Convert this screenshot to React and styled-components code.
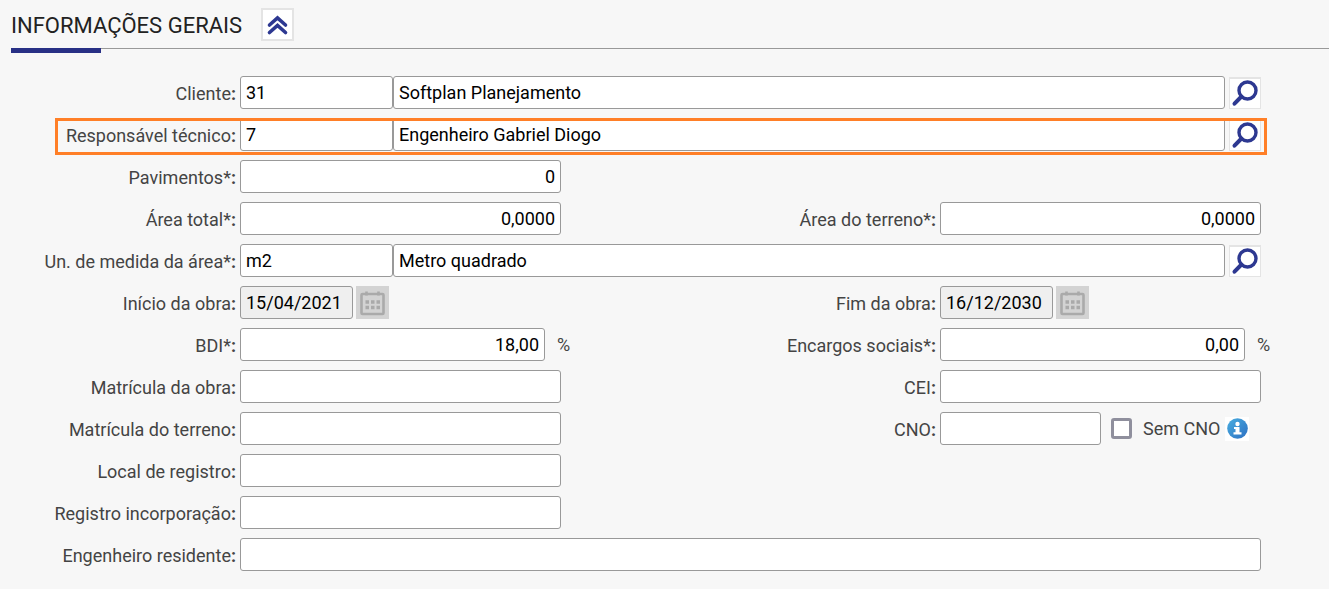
import { useId, useState } from 'react'
import styled, { createGlobalStyle, css } from 'styled-components'

const GlobalStyle = createGlobalStyle`
  *, *:before, *:after {
    box-sizing: border-box;
  }

  body {
    margin: 0;
    background: #f7f7f7;
    color: #444;
    font-family: Roboto, "Liberation Sans", sans-serif;
    font-size: 18px;
    line-height: 21px;
  }
`

const Page = styled.main`
  padding: 8px 0 16px 11px;
`

const Header = styled.header`
  position: relative;
  display: flex;
  align-items: center;
  gap: 19px;
  padding-bottom: 7px;
  border-bottom: 1px solid #999;

  &:after {
    content: '';
    position: absolute;
    left: 0;
    top: 100%;
    width: 90px;
    height: 5px;
    background: #283085;
  }
`

const Title = styled.h1`
  margin: 0;
  padding-top: 2px;
  color: #222;
  font-size: 22px;
  font-weight: 400;
  line-height: 31px;
`

const IconButton = styled.button`
  display: flex;
  align-items: center;
  justify-content: center;
  flex: none;
  width: 33px;
  height: 33px;
  padding: 0;
  border: 2px solid #e4e4e4;
  background: #fff;
  color: #2d3891;
  cursor: pointer;

  &:disabled {
    border-color: #d3d3d3;
    background: #d3d3d3;
    color: #aaa;
    cursor: default;
  }
`

const SearchButton = styled(IconButton)`
  width: 32px;
  height: 32px;
  margin-left: 4px;
  border-width: 2px 1px 1px;
`

const CalendarButton = styled(IconButton)`
  margin-left: 3px;
`

const Form = styled.form`
  display: flex;
  flex-direction: column;
  gap: 9px;
  padding: 27px 68px 0 0;
`

const Row = styled.div`
  position: relative;
  display: grid;
  grid-template-columns: 225px minmax(0, 1fr) 371px minmax(0, 1fr);
  column-gap: 4px;
  align-items: center;

  ${({ $highlight }) => $highlight && css`
    &:after {
      content: '';
      position: absolute;
      top: 0;
      right: -6px;
      bottom: -4px;
      left: 44px;
      border: 3px solid #ff7f27;
      pointer-events: none;
    }
  `}
`

const Label = styled.label`
  padding-top: 1px;
  text-align: right;
  white-space: nowrap;

  &:after {
    content: ':';
    font-weight: 700;
  }
`

const Cell = styled.div`
  display: flex;
  align-items: center;
  min-width: 0;
  grid-column: ${({ $full }) => ($full ? '2 / -1' : 'auto')};
`

const Input = styled.input`
  flex: ${({ $width }) => ($width ? 'none' : '1')};
  width: ${({ $width }) => $width || '100%'};
  min-width: 0;
  height: 33px;
  padding: 0 5px;
  border: 1px solid #999;
  border-radius: 3px;
  background: #fff;
  color: #000;
  font: inherit;
  text-align: ${({ $numeric }) => ($numeric ? 'right' : 'left')};

  &:disabled {
    background: #efefef;
  }
`

const Unit = styled.span`
  margin-left: 12px;
`

const Checkbox = styled.input`
  appearance: none;
  flex: none;
  width: 21px;
  height: 21px;
  margin: 0 11px 0 10px;
  border: 3px solid #8f8f9d;
  border-radius: 3px;
  background: #fff;

  &:checked {
    background: #2d3891;
  }
`

const CheckLabel = styled.label`
  white-space: nowrap;
`

const Info = styled.span`
  display: flex;
  flex: none;
  margin-left: 5px;
  background: #fff;
`

const CollapseIcon = () => (
  <svg width="29" height="29" viewBox="0 0 29 29" fill="none" stroke="currentColor" strokeWidth="3.6" strokeLinecap="round">
    <path d="M6.500 15 14.500 8l8 7M6.500 22.500l8-7 8 7" />
  </svg>
)

const SearchIcon = () => (
  <svg width="30" height="29" viewBox="0 0 30 29" fill="none" stroke="currentColor">
    <circle cx="17.500" cy="11.500" r="8.500" strokeWidth="3.400" />
    <path d="m11.500 17.500-7 7.200" strokeWidth="4" strokeLinecap="round" />
  </svg>
)

const CalendarIcon = () => (
  <svg width="29" height="29" viewBox="0 0 29 29" fill="none" stroke="currentColor">
    <rect x="3.500" y="6" width="22" height="20" rx="1" strokeWidth="2.600" />
    <path d="M8.500 3.500v4M20.500 3.500v4" strokeWidth="2.600" />
    <path d="M7.500 14h3.500m2 0h3.500m2 0H22M7.500 19.500h3.500m2 0h3.500m2 0H22" strokeWidth="3.500" />
  </svg>
)

const InfoIcon = () => (
  <svg width="24" height="24" viewBox="0 0 24 24" role="img" aria-label="Informação">
    <defs>
      <linearGradient id="infoFill" x1="0" y1="0" x2="1" y2="1">
        <stop offset="0" stopColor="#4aaee0" />
        <stop offset="1" stopColor="#2c6fc2" />
      </linearGradient>
    </defs>
    <circle cx="12.500" cy="11.500" r="10.300" fill="url(#infoFill)" />
    <circle cx="12.500" cy="7" r="2.200" fill="#fff" />
    <path d="M9 10h5.500v5.300h2v2.200h-8v-2.200h2V12H9z" fill="#fff" />
  </svg>
)

function TextField({ label, value = '', full, unit, ...props }) {
  const id = useId()
  return (
    <>
      <Label htmlFor={id}>{label}</Label>
      <Cell $full={full}>
        <Input id={id} defaultValue={value} $width={unit && 'calc(100% - 16px)'} {...props} />
        {unit && <Unit>{unit}</Unit>}
      </Cell>
    </>
  )
}

function LookupField({ label, code, value }) {
  const id = useId()
  return (
    <>
      <Label htmlFor={id}>{label}</Label>
      <Cell $full>
        <Input id={id} defaultValue={code} $width="153px" />
        <Input aria-label={`${label} - descrição`} defaultValue={value} />
        <SearchButton type="button" aria-label={`Pesquisar ${label}`}><SearchIcon /></SearchButton>
      </Cell>
    </>
  )
}

function DateField({ label, value }) {
  const id = useId()
  return (
    <>
      <Label htmlFor={id}>{label}</Label>
      <Cell>
        <Input id={id} defaultValue={value} $width="113px" disabled />
        <CalendarButton type="button" aria-label={`Calendário ${label}`} disabled><CalendarIcon /></CalendarButton>
      </Cell>
    </>
  )
}

function CnoField() {
  return (
    <>
      <Label htmlFor="cno">CNO</Label>
      <Cell>
        <Input id="cno" $width="161px" />
        <Checkbox type="checkbox" id="semCno" />
        <CheckLabel htmlFor="semCno">Sem CNO</CheckLabel>
        <Info><InfoIcon /></Info>
      </Cell>
    </>
  )
}

export default function App() {
  const [open, setOpen] = useState(true)

  return (
    <Page>
      <GlobalStyle />
      <Header>
        <Title>INFORMAÇÕES GERAIS</Title>
        <IconButton type="button" aria-label="Recolher" aria-expanded={open} onClick={() => setOpen(!open)}>
          <CollapseIcon />
        </IconButton>
      </Header>
      {open && (
        <Form>
          <Row>
            <LookupField label="Cliente" code="31" value="Softplan Planejamento" />
          </Row>
          <Row $highlight>
            <LookupField label="Responsável técnico" code="7" value="Engenheiro Gabriel Diogo" />
          </Row>
          <Row>
            <TextField label="Pavimentos*" value="0" $numeric />
          </Row>
          <Row>
            <TextField label="Área total*" value="0,0000" $numeric />
            <TextField label="Área do terreno*" value="0,0000" $numeric />
          </Row>
          <Row>
            <LookupField label="Un. de medida da área*" code="m2" value="Metro quadrado" />
          </Row>
          <Row>
            <DateField label="Início da obra" value="15/04/2021" />
            <DateField label="Fim da obra" value="16/12/2030" />
          </Row>
          <Row>
            <TextField label="BDI*" value="18,00" unit="%" $numeric />
            <TextField label="Encargos sociais*" value="0,00" unit="%" $numeric />
          </Row>
          <Row>
            <TextField label="Matrícula da obra" />
            <TextField label="CEI" />
          </Row>
          <Row>
            <TextField label="Matrícula do terreno" />
            <CnoField />
          </Row>
          <Row>
            <TextField label="Local de registro" />
          </Row>
          <Row>
            <TextField label="Registro incorporação" />
          </Row>
          <Row>
            <TextField label="Engenheiro residente" full />
          </Row>
        </Form>
      )}
    </Page>
  )
}
